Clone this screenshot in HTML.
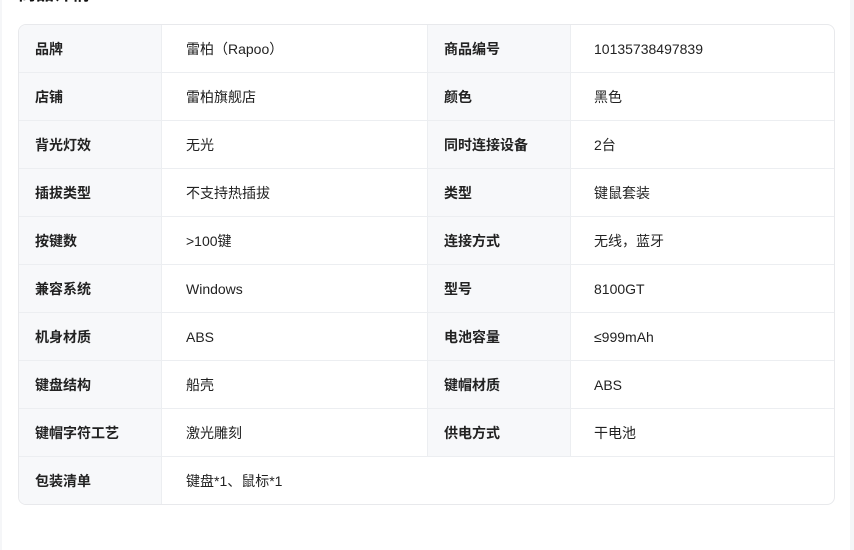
<!DOCTYPE html><html><head><meta charset="utf-8"><style>
body{margin:0;width:854px;height:544px;background:#f5f6f8;overflow:hidden;font-family:"Liberation Sans","Noto Sans CJK SC",sans-serif;font-size:14px;color:#222}
.card{position:absolute;left:2px;top:-10px;width:848px;height:560px;background:#fff}
h2{position:absolute;left:18px;top:-17px;margin:0;font-size:18px;line-height:22px;font-weight:bold;color:#111;z-index:2}
table{position:absolute;left:16px;top:34px;width:817px;border-collapse:separate;border-spacing:0;border:1px solid #e8e9ec;border-radius:8px;overflow:hidden}
td{height:47px;border-bottom:1px solid #eceef1;padding:0;vertical-align:middle}
tr:last-child td{border-bottom:none}
td.l{background:#f7f8fa;font-weight:bold;width:126px;padding-left:16px;border-right:1px solid #eceef1}
td.v{padding-left:24px;width:241px;border-right:1px solid #eceef1}
td.v2{padding-left:23px}
td.v.last{border-right:none}
</style></head><body><h2>商品详情</h2><div class="card">
<table>
<tr><td class="l">品牌</td><td class="v">雷柏（Rapoo）</td><td class="l">商品编号</td><td class="v2">10135738497839</td></tr>
<tr><td class="l">店铺</td><td class="v">雷柏旗舰店</td><td class="l">颜色</td><td class="v2">黑色</td></tr>
<tr><td class="l">背光灯效</td><td class="v">无光</td><td class="l">同时连接设备</td><td class="v2">2台</td></tr>
<tr><td class="l">插拔类型</td><td class="v">不支持热插拔</td><td class="l">类型</td><td class="v2">键鼠套装</td></tr>
<tr><td class="l">按键数</td><td class="v">&gt;100键</td><td class="l">连接方式</td><td class="v2">无线，蓝牙</td></tr>
<tr><td class="l">兼容系统</td><td class="v">Windows</td><td class="l">型号</td><td class="v2">8100GT</td></tr>
<tr><td class="l">机身材质</td><td class="v">ABS</td><td class="l">电池容量</td><td class="v2">≤999mAh</td></tr>
<tr><td class="l">键盘结构</td><td class="v">船壳</td><td class="l">键帽材质</td><td class="v2">ABS</td></tr>
<tr><td class="l">键帽字符工艺</td><td class="v">激光雕刻</td><td class="l">供电方式</td><td class="v2">干电池</td></tr>
<tr><td class="l">包装清单</td><td class="v last" colspan="3">键盘*1、鼠标*1</td></tr>
</table></div></body></html>
